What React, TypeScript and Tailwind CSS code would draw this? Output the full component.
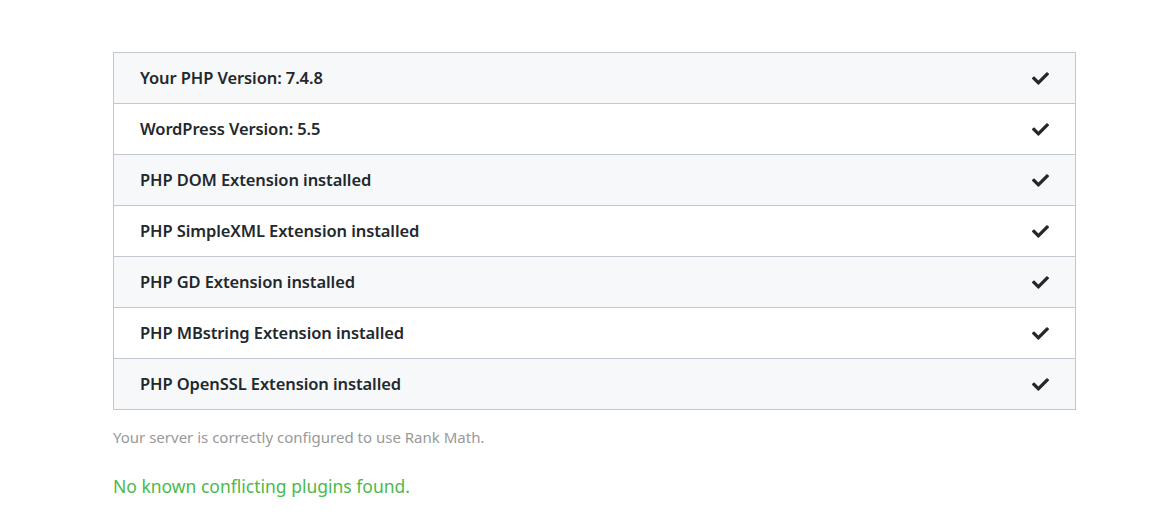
const CHECKS = [
  'Your PHP Version: 7.4.8',
  'WordPress Version: 5.5',
  'PHP DOM Extension installed',
  'PHP SimpleXML Extension installed',
  'PHP GD Extension installed',
  'PHP MBstring Extension installed',
  'PHP OpenSSL Extension installed',
]

const Check = () => (
  <svg viewBox="0 0 512 512" className="w-[17px] h-[17px] shrink-0" fill="#23282d">
    <path d="M173.898 439.404l-166.4-166.4c-9.997-9.997-9.997-26.206 0-36.204l36.203-36.204c9.997-9.998 26.207-9.998 36.204 0L192 312.69 432.095 72.596c9.997-9.997 26.207-9.997 36.204 0l36.203 36.204c9.997 9.997 9.997 26.206 0 36.204l-294.4 294.401c-9.998 9.997-26.207 9.997-36.204-.001z" />
  </svg>
)

export default function App() {
  return (
    <div className="min-h-[521px] bg-white pt-[52px] pl-[113px] pr-[89px] font-['Noto_Sans','Open_Sans',sans-serif]">
      {/* Requirements table */}
      <div className="border border-[#c3c8d0]">
        {CHECKS.map((label, i) => (
          <div
            key={label}
            className={`box-content flex items-center justify-between h-[50px] pl-[26px] pr-[26px] ${i > 0 ? 'border-t border-[#c3c8d0]' : ''} ${i % 2 === 0 ? 'bg-[#f7f8fa]' : 'bg-white'}`}
          >
            <span className="text-[16.5px] font-semibold text-[#23282d] tracking-[-0.1px]">{label}</span>
            <Check />
          </div>
        ))}
      </div>

      <p className="mt-[16px] text-[15px] text-[#999999]">Your server is correctly configured to use Rank Math.</p>
      <p className="mt-[24px] text-[17.5px] text-[#4cb94a]">No known conflicting plugins found.</p>
    </div>
  )
}
